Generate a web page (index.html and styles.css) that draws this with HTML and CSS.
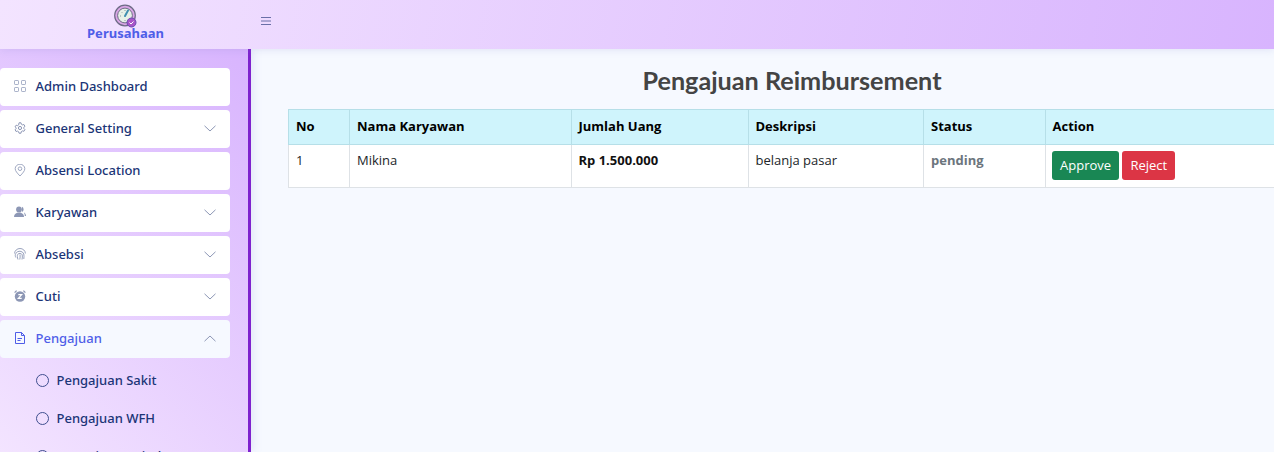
FILE: index.html
```html
<!DOCTYPE html>
<html lang="id">
<head>
  <meta charset="UTF-8">
  <title>Pengajuan Reimbursement</title>
  <meta name="viewport" content="width=device-width, initial-scale=1.0">
  <link rel="stylesheet" href="styles.css">
</head>
<body>
  <header class="topbar">
    <div class="brand">
      <svg class="brand-logo" width="24" height="24" viewBox="0 0 24 24">
        <circle cx="12" cy="11.5" r="10.3" fill="#d9a6e6" stroke="#6d6a86" stroke-width="1.2"/>
        <circle cx="12" cy="11.5" r="7.4" fill="#e6f0e8" stroke="#6d6a86" stroke-width="1"/>
        <path d="M12 12 15 6.5" stroke="#3f8fb0" stroke-width="2" stroke-linecap="round"/>
        <path d="M7 12h1M12 6v1M8.500 8l.7.7M12 16v1" stroke="#8a9aa0" stroke-width="1"/>
        <circle cx="18.500" cy="18.500" r="4.500" fill="#a855c8" stroke="#6a4ab0" stroke-width="1"/>
        <path d="M16.500 18.500l1.500 1.500 2.500-2.500" fill="none" stroke="#fff" stroke-width="1"/>
      </svg>
      <span class="brand-name">Perusahaan</span>
    </div>
    <button class="toggle" aria-label="menu">
      <svg width="10" height="8" viewBox="0 0 10 8"><path d="M0 .5h10M0 4h10M0 7.500h10" stroke="#6a6fa8" stroke-width="1"/></svg>
    </button>
  </header>

  <div class="layout">
    <aside class="sidebar">
      <a class="menu-item">
        <svg class="menu-icon" viewBox="0 0 12 12" fill="none" stroke="#a9b2c9"><rect x=".5" y=".5" width="4" height="4" rx=".6"/><rect x="7.500" y=".5" width="4" height="4" rx=".6"/><rect x=".5" y="7.500" width="4" height="4" rx=".6"/><rect x="7.500" y="7.500" width="4" height="4" rx=".6"/></svg>
        <span>Admin Dashboard</span>
      </a>
      <a class="menu-item">
        <svg class="menu-icon" viewBox="0 0 12 12" fill="none" stroke="#8d97b5"><path d="M5 .8h2l.3 1.400 1.200.7 1.400-.4 1 1.700-1 1v1.400l1 1-1 1.700-1.400-.4-1.200.7L7 11.200H5l-.3-1.400-1.200-.7-1.400.4-1-1.700 1-1V5.900l-1-1 1-1.700 1.400.4 1.200-.7z"/><circle cx="6" cy="6" r="1.600"/></svg>
        <span>General Setting</span>
        <svg class="chevron" viewBox="0 0 12 7"><path d="M.5.8 6 6 11.500.8"/></svg>
      </a>
      <a class="menu-item">
        <svg class="menu-icon" viewBox="0 0 12 12" fill="none" stroke="#a0a9c2"><path d="M6 12C3.200 9 1.200 7 1.200 4.700a4.800 4.500 0 0 1 9.600 0C10.800 7 8.800 9 6 12z"/><circle cx="6" cy="4.700" r="1.800"/></svg>
        <span>Absensi Location</span>
      </a>
      <a class="menu-item">
        <svg class="menu-icon" viewBox="0 0 12 12" fill="#8d97b5"><circle cx="5" cy="3.400" r="2.900"/><path d="M0 11c0-3 2.200-4.600 5-4.600s5 1.600 5 4.600z"/><path d="M8 .8a2.900 2.900 0 0 1 0 5.200zM10 6.500c1.300.6 2 2 2 3.500h-1.200c0-1.300-.3-2.500-.8-3.500z"/></svg>
        <span>Karyawan</span>
        <svg class="chevron" viewBox="0 0 12 7"><path d="M.5.8 6 6 11.500.8"/></svg>
      </a>
      <a class="menu-item">
        <svg class="menu-icon" viewBox="0 0 12 12" fill="none" stroke="#8d97b5" stroke-width=".9"><path d="M.6 5.500a5.400 5 0 0 1 10.800 0M1.800 9.500C1 8 1.200 6.500 1.800 5.500a4.300 4 0 0 1 8 .5c.3 1.500.2 3.500 0 5M4 11.500C3.300 9.500 3 7.500 3.800 6.300a2.600 2.400 0 0 1 4.400.5c.3 1.500.2 3-.2 4.700M6 6.500c.2 1.700.2 3.500-.2 5"/></svg>
        <span>Absebsi</span>
        <svg class="chevron" viewBox="0 0 12 7"><path d="M.5.8 6 6 11.500.8"/></svg>
      </a>
      <a class="menu-item">
        <svg class="menu-icon" viewBox="0 0 12 12"><circle cx="6" cy="6.500" r="5.200" fill="#8d97b5"/><path d="M.6 2.600 2.600.6M11.400 2.600 9.400.6" stroke="#8d97b5" stroke-width="1.300"/><path d="M4.300 4.600h3.400L4.300 8.400h3.400" fill="none" stroke="#fff" stroke-width="1.200"/></svg>
        <span>Cuti</span>
        <svg class="chevron" viewBox="0 0 12 7"><path d="M.5.8 6 6 11.500.8"/></svg>
      </a>
      <a class="menu-item active">
        <svg class="menu-icon" viewBox="0 0 12 12" fill="none" stroke="#4f5ee8"><path d="M1.500 .5h6L10.500 3.500v8h-9zM7.500 .5v3h3"/><path d="M3.500 6.500h4.500M3.500 8.500h3"/></svg>
        <span>Pengajuan</span>
        <svg class="chevron" viewBox="0 0 12 7"><path d="M.5 6.200 6 1l5.500 5.200"/></svg>
      </a>
      <ul class="submenu">
        <li><i class="dot"></i>Pengajuan Sakit</li>
        <li><i class="dot"></i>Pengajuan WFH</li>
        <li><i class="dot"></i>Pengajuan Reimbursement</li>
      </ul>
    </aside>

    <main class="content">
      <h1 class="page-title">Pengajuan Reimbursement</h1>
      <table class="data-table">
        <thead>
          <tr>
            <th class="col-no">No</th>
            <th class="col-name">Nama Karyawan</th>
            <th class="col-amount">Jumlah Uang</th>
            <th class="col-desc">Deskripsi</th>
            <th class="col-status">Status</th>
            <th class="col-action">Action</th>
          </tr>
        </thead>
        <tbody>
          <tr>
            <td>1</td>
            <td>Mikina</td>
            <td><strong>Rp 1.500.000</strong></td>
            <td>belanja pasar</td>
            <td><strong class="status">pending</strong></td>
            <td class="actions">
              <button class="btn btn-approve">Approve</button>
              <button class="btn btn-reject">Reject</button>
            </td>
          </tr>
        </tbody>
      </table>
    </main>
  </div>
</body>
</html>
```

FILE: styles.css
```css
* {
  box-sizing: border-box;
}

html, body {
  height: 100%;
}

body {
  margin: 0;
  overflow: hidden;
  background: #f6f9ff;
  font-family: "Open Sans", sans-serif;
  font-size: 13px;
  color: #212529;
}

.topbar {
  position: relative;
  z-index: 2;
  height: 49px;
  display: flex;
  align-items: flex-start;
  background: linear-gradient(100deg, #f3e4ff 0%, #d8b4fe 100%);
  box-shadow: 0 1px 8px rgba(120, 130, 200, 0.18);
}

.brand {
  width: 251px;
  display: flex;
  flex-direction: column;
  align-items: center;
}

.brand-logo {
  margin-top: 4px;
  margin-left: -2px;
}

.brand-name {
  margin-top: -2px;
  font-family: "Noto Sans", sans-serif;
  font-size: 13px;
  font-weight: 700;
  line-height: 14px;
  color: #4f5ee8;
}

.toggle {
  display: flex;
  padding: 0;
  margin: 17px 0 0 10px;
  border: none;
  background: none;
}

.layout {
  display: flex;
  height: 403px;
}

.sidebar {
  position: relative;
  z-index: 1;
  width: 251px;
  flex-shrink: 0;
  overflow: hidden;
  padding-top: 19px;
  background: linear-gradient(45deg, #f3e4ff 0%, #d8b4fe 100%);
  border-right: 3px solid #7e22ce;
  box-shadow: 1px 0 10px rgba(120, 130, 200, 0.2);
}

.menu-item {
  width: 230px;
  height: 38px;
  margin-bottom: 4px;
  padding: 0 14px 2px;
  display: flex;
  align-items: center;
  background: #fff;
  border-radius: 4px;
  font-family: "Noto Sans", sans-serif;
  font-size: 13px;
  font-weight: 500;
  color: #1b3577;
}

.menu-icon {
  width: 12px;
  height: 12px;
  margin-right: 9.500px;
  flex-shrink: 0;
}

.chevron {
  width: 12px;
  height: 7px;
  margin-left: auto;
  fill: none;
  stroke: #8d97b5;
  stroke-width: 1;
}

.menu-item.active {
  background: #f6f9ff;
  color: #4f5ee8;
}

.submenu {
  margin: 0;
  padding: 0 0 0 36px;
  list-style: none;
  font-family: "Noto Sans", sans-serif;
  font-size: 13px;
  font-weight: 500;
  color: #1b3577;
}

.submenu li {
  height: 38px;
  padding-bottom: 2px;
  display: flex;
  align-items: center;
  white-space: nowrap;
}

.dot {
  width: 13px;
  height: 13px;
  margin-right: 7.500px;
  border: 1px solid #3f4f8f;
  border-radius: 50%;
}

.content {
  flex: 1;
  min-width: 0;
  padding: 16px 0 0 37px;
}

.page-title {
  width: 1008px;
  margin: 0 0 13px;
  font-family: "Lato", sans-serif;
  font-size: 25.200px;
  font-weight: 700;
  line-height: 31px;
  text-align: center;
  color: #444;
}

.data-table {
  width: 1008px;
  table-layout: fixed;
  border-collapse: collapse;
  background: #fff;
}

.data-table th,
.data-table td {
  padding: 6px 7px;
  text-align: left;
  vertical-align: top;
  border: 1px solid #dee2e6;
  line-height: 20px;
}

.data-table th {
  height: 35px;
  background: #cff4fc;
  border-color: #b6dfe8;
  font-weight: 700;
  color: #000;
}

.data-table td {
  height: 43px;
  padding-top: 5px;
}

.data-table strong {
  font-weight: 700;
  color: #111;
}

.data-table .status {
  color: #6c757d;
}

.col-no { width: 61px; }
.col-name { width: 221.500px; }
.col-amount { width: 177px; }
.col-desc { width: 175.500px; }
.col-status { width: 121.500px; }
.col-action { width: 251.500px; }

.data-table td.actions {
  padding: 6px;
  white-space: nowrap;
}

.btn {
  height: 29px;
  padding: 0 7.500px 2px 8.500px;
  border: none;
  border-radius: 3px;
  font-family: "Open Sans", sans-serif;
  font-size: 13px;
  color: #fff;
}

.btn-approve {
  background: #198754;
}

.btn-reject {
  background: #dc3545;
}
```
